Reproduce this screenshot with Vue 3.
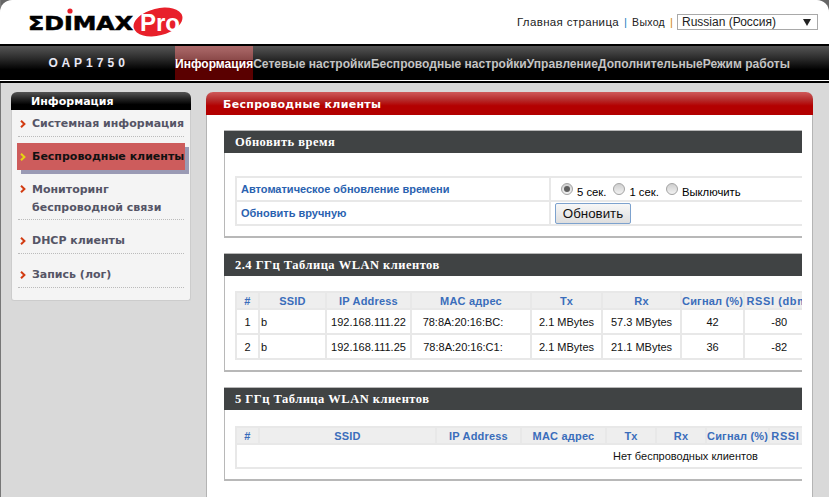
<script setup>
const navItems = [
  { label: "Информация", active: true },
  { label: "Сетевые настройки" },
  { label: "Беспроводные настройки" },
  { label: "Управление" },
  { label: "Дополнительные" },
  { label: "Режим работы" },
];

const sideItems = [
  { label: "Системная информация", cls: "" },
  { label: "Беспроводные клиенты", cls: "is-active" },
  { label: "Мониторинг беспроводной связи", cls: "is-double" },
  { label: "DHCP клиенты", cls: "" },
  { label: "Запись (лог)", cls: "" },
];

const radios = [
  { label: "5 сек.", checked: true },
  { label: "1 сек.", checked: false },
  { label: "Выключить", checked: false },
];

const heads = ["#", "SSID", "IP Address", "MAC адрес", "Tx", "Rx", "Сигнал (%)", "RSSI (dbm)"];

const widths24 = [23, 67, 85, 120, 71, 79, 63, 70];
const widths5 = [23, 177, 85, 85, 50, 50, 63, 70];

const clients = [
  ["1", "b", "192.168.111.22", "78:8A:20:16:BC:", "2.1 MBytes", "57.3 MBytes", "42", "-80"],
  ["2", "b", "192.168.111.25", "78:8A:20:16:C1:", "2.1 MBytes", "21.1 MBytes", "36", "-82"],
];
</script>

<template>
  <div class="page">
    <header class="top">
      <svg class="logo" width="170" height="36" viewBox="0 0 170 36">
        <text x="0" y="23" class="logo-word" textLength="105" lengthAdjust="spacingAndGlyphs">ΣDIMAX</text>
        <circle cx="42" cy="4" r="2.6" fill="#e8202a" />
        <ellipse cx="130" cy="15" rx="25" ry="13.5" fill="#e8202a" transform="rotate(-14 130 15)" />
        <text x="112" y="24" class="logo-pro">Pro</text>
      </svg>
      <div class="top-links">
        <span class="home">Главная страница</span>
        <span class="sep-blue">|</span>
        <span class="logout">Выход</span>
        <span class="sep-orange">|</span>
        <div class="lang">
          <span>Russian (Россия)</span>
          <i class="lang-arrow"></i>
        </div>
      </div>
    </header>

    <nav class="nav">
      <div class="model">O A P 1 7 5 0</div>
      <div
        v-for="item in navItems"
        :key="item.label"
        class="nav-item"
        :class="{ 'nav-item--active': item.active }"
      >
        {{ item.label }}
      </div>
    </nav>

    <div class="content">
      <aside class="side">
        <div class="side-title">Информация</div>
        <ul class="side-list">
          <li v-for="item in sideItems" :key="item.label" class="side-item" :class="item.cls">
            <svg class="chev" width="6" height="8" viewBox="0 0 6 8">
              <path d="M1 .8 4.4 4 1 7.2" fill="none" stroke-width="2" />
            </svg>
            <span>{{ item.label }}</span>
          </li>
        </ul>
      </aside>

      <main class="panel">
        <div class="panel-title">Беспроводные клиенты</div>
        <div class="panel-clip">
          <section class="box">
            <h3 class="box-title">Обновить время</h3>
            <div class="box-body box-body--time">
              <table class="time-table">
                <tbody>
                  <tr>
                    <td class="time-label">Автоматическое обновление времени</td>
                    <td class="time-value">
                      <div class="radios">
                        <label v-for="r in radios" :key="r.label" class="radio">
                          <i class="radio-dot" :class="{ 'is-checked': r.checked }"></i>
                          {{ r.label }}
                        </label>
                      </div>
                    </td>
                  </tr>
                  <tr>
                    <td class="time-label">Обновить вручную</td>
                    <td class="time-value">
                      <button class="refresh" type="button">Обновить</button>
                    </td>
                  </tr>
                </tbody>
              </table>
            </div>
          </section>

          <section class="box">
            <h3 class="box-title">2.4 ГГц Таблица WLAN клиентов</h3>
            <div class="box-body box-body--wlan">
              <table class="wlan">
                <colgroup>
                  <col v-for="(w, i) in widths24" :key="i" :style="{ width: w + 'px' }" />
                </colgroup>
                <thead>
                  <tr><th v-for="h in heads" :key="h">{{ h }}</th></tr>
                </thead>
                <tbody>
                  <tr v-for="row in clients" :key="row[0]">
                    <td
                      v-for="(cell, i) in row"
                      :key="i"
                      :class="{ 'ssid-cell': i === 1, 'mac-cell': i === 3 }"
                    >
                      {{ cell }}
                    </td>
                  </tr>
                </tbody>
              </table>
            </div>
          </section>

          <section class="box">
            <h3 class="box-title">5 ГГц Таблица WLAN клиентов</h3>
            <div class="box-body box-body--wlan box-body--empty">
              <table class="wlan wlan--empty">
                <colgroup>
                  <col v-for="(w, i) in widths5" :key="i" :style="{ width: w + 'px' }" />
                </colgroup>
                <thead>
                  <tr><th v-for="h in heads" :key="h">{{ h }}</th></tr>
                </thead>
                <tbody>
                  <tr><td colspan="8" class="empty">Нет беспроводных клиентов</td></tr>
                </tbody>
              </table>
            </div>
          </section>
        </div>
      </main>
    </div>
  </div>
</template>

<style>
html,
body {
  margin: 0;
  background: #d9d9d9;
}
</style>

<style scoped>
.page {
  width: 829px;
  height: 497px;
  overflow: hidden;
  background: linear-gradient(#666 0 44px, #d9d9d9 44px);
  box-shadow: inset 1px 0 0 #777;
  font-family: "Liberation Sans", Arial, sans-serif;
}

/* top */
.top {
  height: 44px;
  box-sizing: border-box;
  display: flex;
  justify-content: space-between;
  background: #fff;
  border-radius: 12px 12px 0 0;
  padding: 7px 11px 0 28px;
}

.logo {
  display: block;
}

.logo-word {
  font: 700 20px "DejaVu Sans", sans-serif;
  fill: #000;
  stroke: #000;
  stroke-width: 0.6px;
}

.logo-pro {
  font: 700 24px "Liberation Sans", sans-serif;
  fill: #fff;
}

.top-links {
  display: flex;
  align-items: flex-start;
  font-size: 11.5px;
  color: #222;
  padding-top: 7px;
}

.home {
  letter-spacing: 0.35px;
  line-height: 16px;
}

.sep-blue,
.sep-orange {
  line-height: 16px;
  margin: 0 5px;
}

.sep-blue {
  color: #2a7fc0;
}

.sep-orange {
  color: #d08a1a;
}

.logout {
  font-size: 10.5px;
  line-height: 16px;
  letter-spacing: 0.3px;
}

.lang {
  width: 141px;
  height: 16px;
  box-sizing: border-box;
  border: 1px solid #a9a9a9;
  display: flex;
  align-items: center;
  justify-content: space-between;
  padding: 0 6px 0 4px;
  font-size: 12px;
  margin-left: -1px;
}

.lang-arrow {
  width: 0;
  height: 0;
  border-left: 4px solid transparent;
  border-right: 4px solid transparent;
  border-top: 7px solid #222;
}

/* nav */
.nav {
  height: 34px;
  display: flex;
  background: linear-gradient(#555 0%, #2d2d2d 35%, #000 70%, #000 100%);
  border-top: 2px solid #000;
  border-bottom: 1px solid #fff;
  box-shadow: 0 2px 0 #000;
  margin-bottom: 2px;
}

.model {
  width: 175px;
  padding-right: 1px;
  box-sizing: border-box;
  text-align: center;
  font-size: 12px;
  font-weight: 700;
  color: #e8e8f4;
  line-height: 34px;
  letter-spacing: 0.4px;
}

.nav-item {
  font-size: 12px;
  font-weight: 700;
  line-height: 36px;
  color: #c4c4c4;
  letter-spacing: 0.03px;
}

.nav-item--active {
  color: #fff;
  background: linear-gradient(#ad6b6b 0%, #8c4a4a 40%, #5a0000 42%, #5a0000 100%);
}

/* body */
.content {
  display: flex;
  align-items: flex-start;
  padding-top: 9px;
}

.side {
  width: 180px;
  margin-left: 11px;
  flex: none;
  background: #f4f4f4;
  border: 1px solid #ccc;
  border-top: 0;
  box-sizing: border-box;
  border-radius: 6px 6px 3px 3px;
  height: 209px;
}

.side-title {
  height: 18px;
  margin: 0 -1px;
  padding-left: 20px;
  background: linear-gradient(#555 0%, #222 40%, #000 70%);
  border-radius: 6px 6px 0 0;
  color: #fff;
  font: 700 11px/19px "DejaVu Sans", Verdana, sans-serif;
}

.side-list {
  list-style: none;
  margin: 0;
  padding: 0 6px;
}

.side-item {
  display: flex;
  gap: 6px;
  padding: 1px 0 0 2px;
  font: 700 11px/17px "DejaVu Sans", Verdana, sans-serif;
  color: #555566;
  border-bottom: 1px dotted #bbb;
  height: 25px;
  margin-top: 7px;
  align-items: center;
  white-space: nowrap;
}

.side-item:first-child {
  margin-top: 0;
}

.side-item:last-child {
  padding-top: 0;
  height: 26px;
}

.side-item.is-double {
  height: 44px;
  align-items: flex-start;
  margin-top: 0;
  padding-top: 5px;
  box-sizing: border-box;
  white-space: normal;
  line-height: 18px;
}

.side-item.is-active {
  margin: 6px -1px 6px -1px;
  height: 27px;
  padding: 0 0 0 3px;
  border-bottom: 0;
  background: #cd5c5c;
  box-shadow: 4px 4px 0 #9a9ab4;
  color: #111;
}

.chev {
  flex: none;
  stroke: #d23c12;
  margin-top: 1px;
}

.is-double .chev {
  margin-top: 4px;
}

.is-active .chev {
  stroke: #e6d410;
}

/* main panel */
.panel {
  width: 607px;
  margin-left: 15px;
  flex: none;
  height: 420px;
  box-sizing: border-box;
  background: #fff;
  border: 1px solid #b4b4b4;
  border-top: 0;
  border-radius: 7px 7px 0 0;
}

.panel-title {
  height: 23px;
  margin: 0 -1px;
  padding-left: 17px;
  background: linear-gradient(#cf5a5a 0%, #b52a2a 35%, #b30000 60%);
  border-radius: 7px 7px 0 0;
  color: #fff;
  font: 700 11px/25px "DejaVu Sans", Verdana, sans-serif;
  letter-spacing: 0.3px;
}

.panel-clip {
  margin: 15px 10px 0 17px;
  overflow: hidden;
}

.box {
  width: 700px;
  box-sizing: border-box;
  border: 1px solid #b8b8b8;
  border-right: 0;
  border-bottom-width: 2px;
  margin-bottom: 15px;
}

.box-title {
  margin: 0 0 0 -1px;
  height: 22px;
  padding-left: 11px;
  background: #404344;
  color: #fff;
  font: 700 12.5px/23px "Liberation Serif", "Times New Roman", serif;
  letter-spacing: 0.48px;
}

.box-body {
  padding: 0 0 10px 10px;
}

.box-body--time {
  padding-top: 23px;
}

.box-body--wlan {
  padding-top: 15px;
}

.box-body--empty {
  padding-top: 16px;
}

.time-table,
.wlan {
  border-collapse: collapse;
  table-layout: fixed;
}

.time-table td,
.wlan th,
.wlan td {
  border: 2px solid #e8e8e8;
  padding: 0;
}

.time-table {
  width: 690px;
}

.time-table td {
  height: 22px;
}

.time-label {
  width: 308px;
  padding-left: 4px !important;
  font-size: 11px;
  font-weight: 700;
  color: #2a62b0;
}

.time-value {
  padding-left: 4px !important;
}

.radios {
  display: flex;
  gap: 7px;
  padding-left: 6px;
}

.radio {
  display: flex;
  align-items: flex-start;
  gap: 4px;
  font-size: 11.3px;
  line-height: 14px;
  padding-top: 5px;
}

.radio-dot {
  width: 12px;
  height: 12px;
  margin-top: -2px;
  box-sizing: border-box;
  border-radius: 50%;
  border: 1px solid #a4a4a4;
  background: linear-gradient(#cfcfcf, #f2f2f2);
  position: relative;
}

.radio-dot.is-checked::after {
  content: "";
  position: absolute;
  inset: 2px;
  border-radius: 50%;
  background: #5e5e5e;
}

.refresh {
  display: block;
  width: 76px;
  height: 21px;
  padding: 0;
  border: 1px solid #7da2ce;
  border-radius: 2px;
  background: linear-gradient(#f7f7f7, #dedede);
  font: 13.33px/19px "Liberation Sans", Arial, sans-serif;
  color: #111;
}

.wlan th {
  height: 15px;
  background: #eeeeee;
  font-size: 11px;
  line-height: 14px;
  font-weight: 700;
  color: #3a6dbb;
  letter-spacing: 0.2px;
  white-space: nowrap;
  overflow: hidden;
}

.wlan th:last-child {
  letter-spacing: 0.6px;
}

.wlan td {
  height: 23px;
  font-size: 11px;
  text-align: center;
  color: #111;
  white-space: nowrap;
  overflow: hidden;
}

.wlan td.ssid-cell {
  text-align: left;
  padding-left: 1px;
}

.wlan td.mac-cell {
  padding-right: 16px;
}

.wlan td.empty {
  height: 22px;
  padding-left: 296px;
}

.wlan--empty {
  width: 603px;
}
</style>
